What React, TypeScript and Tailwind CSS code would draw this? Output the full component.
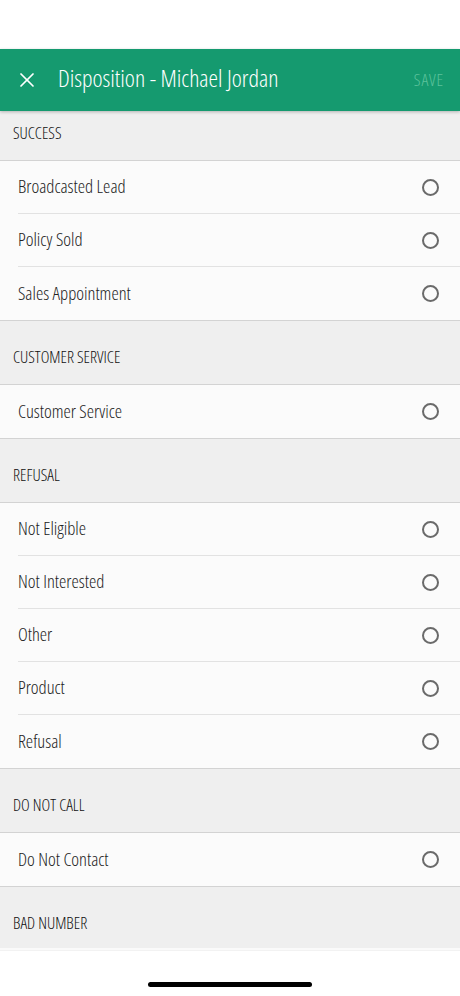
import { X } from "lucide-react";

const sections = [
  { title: "SUCCESS", items: ["Broadcasted Lead", "Policy Sold", "Sales Appointment"] },
  { title: "CUSTOMER SERVICE", items: ["Customer Service"] },
  { title: "REFUSAL", items: ["Not Eligible", "Not Interested", "Other", "Product", "Refusal"] },
  { title: "DO NOT CALL", items: ["Do Not Contact"] },
  { title: "BAD NUMBER", items: [] as string[] },
];

export default function App() {
  return (
    <div className="relative flex h-[996px] w-[460px] flex-col overflow-hidden bg-white font-['Open_Sans',sans-serif] font-light font-stretch-condensed">
      {/* status bar space */}
      <div className="h-[49px] bg-white" />

      <div className="relative z-10 flex h-[62px] items-center bg-[#159a6f] pl-[15px] pr-[16px] shadow-[0_1px_3px_rgba(0,0,0,0.25)]">
        <X className="h-[24px] w-[24px] text-white" strokeWidth={1.7} />
        <h1 className="ml-[19px] mb-[4px] flex-1 text-[24px] leading-none text-white">
          Disposition - Michael Jordan
        </h1>
        <span className="mb-[2px] text-[17px] leading-none tracking-[0.8px] text-[#5cc29c]">SAVE</span>
      </div>

      <div className="flex-1 overflow-hidden">
        {sections.map((s, si) => (
          <div key={s.title}>
            <div
              className={`flex items-end border-b border-[#d3d3d3] bg-[#efefef] pl-[13px] pb-[18px] ${
                si === 0 ? "h-[50px]" : "h-[64px]"
              }`}
            >
              <span className="text-[16.5px] leading-[18px] text-[#111]">{s.title}</span>
            </div>
            {s.items.map((item, i) => (
              <div key={item} className="bg-[#fbfbfb] pl-[18px]">
                <div
                  className={`flex h-[53px] items-center pr-[21px] ${
                    i === s.items.length - 1 ? "" : "border-b border-[#e2e2e2]"
                  }`}
                >
                  <span className="mb-[1px] flex-1 text-[18.5px] leading-none text-[#222]">{item}</span>
                  <span className="h-[17px] w-[17px] rounded-full border-2 border-[#6a6a6a]" />
                </div>
              </div>
            ))}
            {s.items.length > 0 && <div className="border-b border-[#d3d3d3]" />}
          </div>
        ))}
      </div>

      <div className="absolute bottom-0 left-0 right-0 flex h-[48px] items-end justify-center bg-gradient-to-b from-white/70 to-white pb-[9px]">
        <div className="h-[5px] w-[164px] rounded-full bg-black" />
      </div>
    </div>
  );
}
